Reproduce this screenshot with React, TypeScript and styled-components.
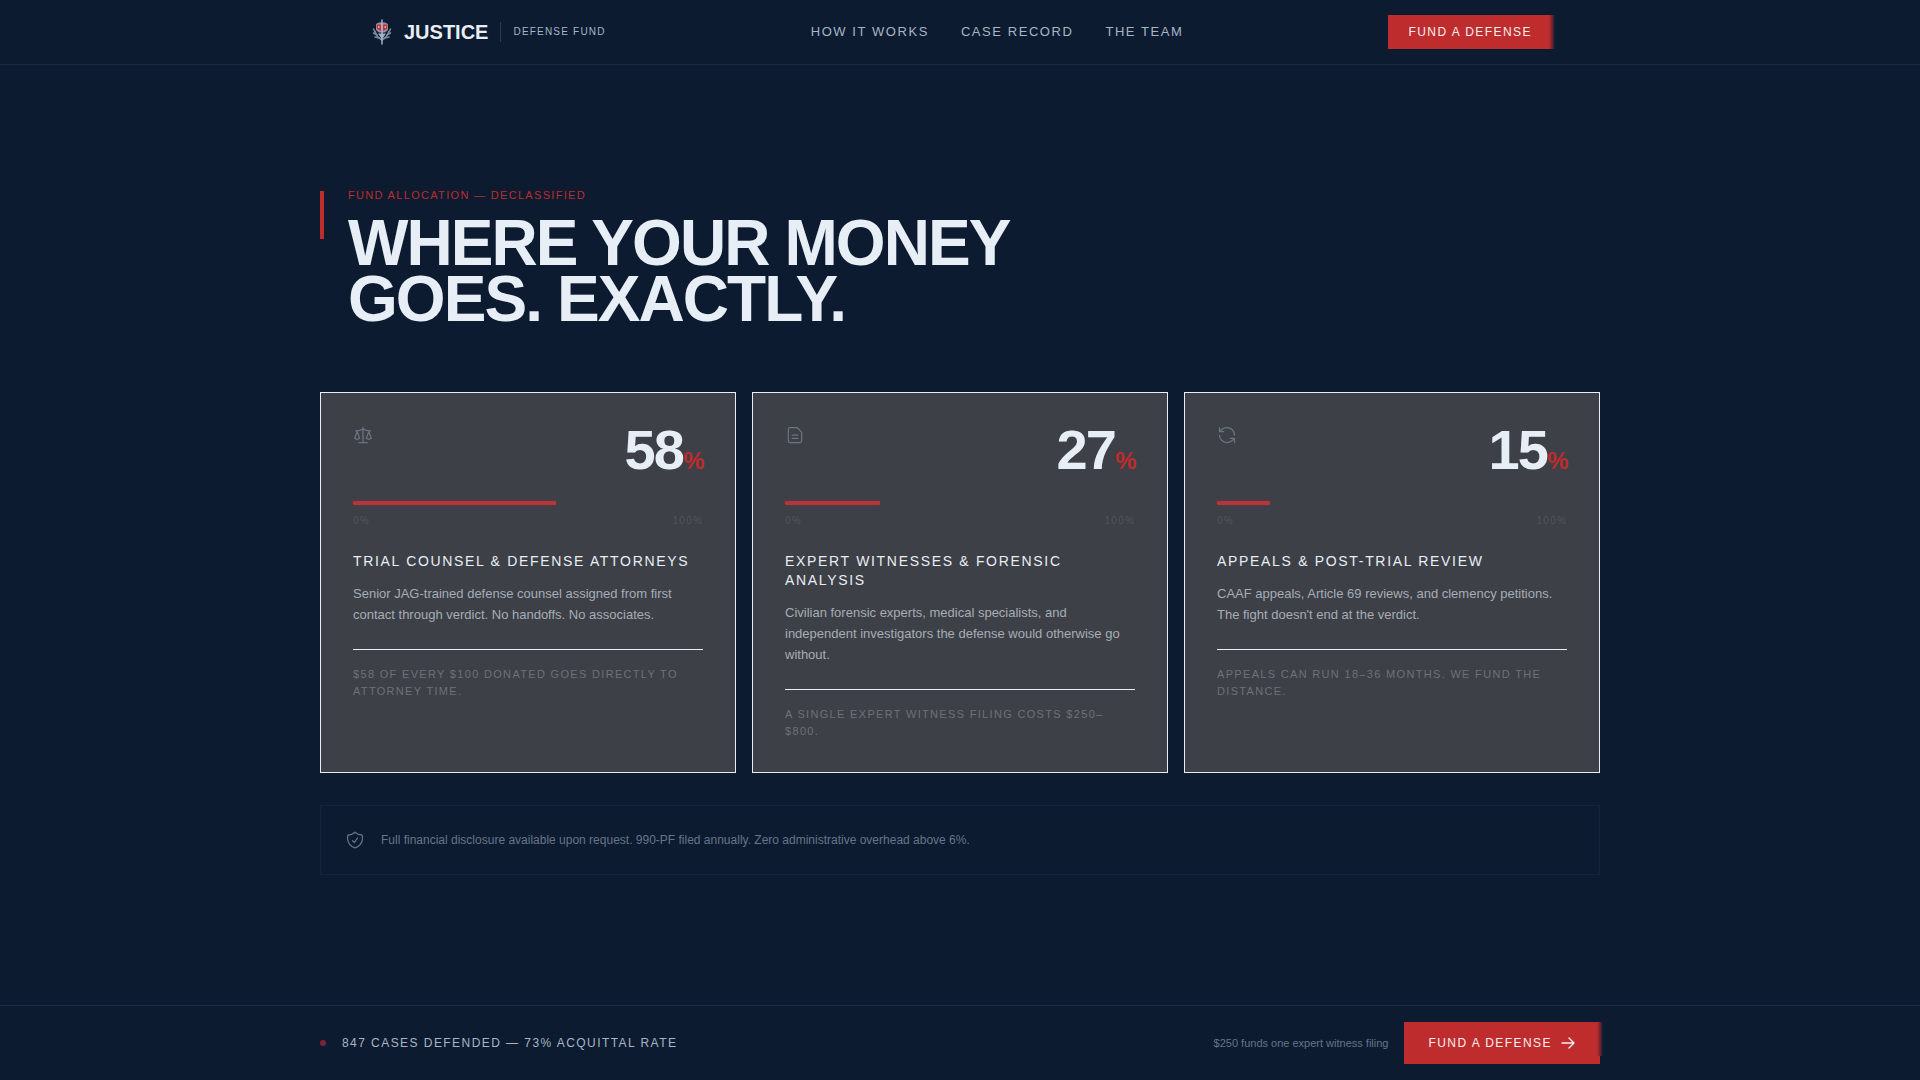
import React from "react";
import styled, { createGlobalStyle } from "styled-components";
import { RefreshCcw, Scale as ScaleIcon } from "lucide-react";
import { HiOutlineArrowRight, HiOutlineShieldCheck } from "react-icons/hi2";

const color = {
  navy: "#0c1b30",
  ice: "#e8eef5",
  red: "#bf2c2d",
  steel: "#a9b5c4",
  slate: "#66758a",
  icon: "#6a7480",
  card: "#3d4046",
  line: "#1b2a40",
};

const tracking = "0.12em";

const GlobalStyle = createGlobalStyle`
  *, *::before, *::after { box-sizing: border-box; }
  body {
    margin: 0;
    background: ${color.navy};
    color: ${color.ice};
    font-family: "Liberation Sans", Arial, sans-serif;
  }
  h1, h2, p { margin: 0; font-weight: 400; }
`;

const Page = styled.div`
  min-height: 100vh;
  display: flex;
  flex-direction: column;
`;

const TopBar = styled.header`
  border-bottom: 1px solid ${color.line};
`;

const TopBarInner = styled.div`
  max-width: 1280px;
  margin: 0 auto;
  padding: 15px 48px;
  display: flex;
  align-items: center;
  justify-content: space-between;
`;

const Brand = styled.a`
  display: flex;
  align-items: center;
  color: inherit;
  text-decoration: none;
`;

const BrandName = styled.span`
  margin-left: 8px;
  font-size: 20px;
  line-height: 24px;
  font-weight: 700;
`;

const BrandSub = styled.span`
  margin-left: 12px;
  padding-left: 12px;
  border-left: 1px solid #2a394e;
  font-size: 10px;
  line-height: 20px;
  letter-spacing: ${tracking};
  color: ${color.steel};
`;

const Nav = styled.nav`
  display: flex;
  gap: 32px;
`;

const NavLink = styled.a`
  font-size: 13px;
  line-height: 20px;
  letter-spacing: ${tracking};
  color: ${color.steel};
  text-decoration: none;
`;

const FundButton = styled.button<{ $large?: boolean }>`
  position: relative;
  display: flex;
  align-items: center;
  gap: 8px;
  height: ${(p) => (p.$large ? 42 : 34)}px;
  padding: 0 ${(p) => (p.$large ? 24 : 20)}px;
  border: 0;
  background: ${color.red};
  color: #fbeff0;
  font-family: inherit;
  font-size: 12px;
  line-height: 16px;
  letter-spacing: ${tracking};
  cursor: pointer;

  &::after {
    content: "";
    position: absolute;
    top: 0;
    right: -3px;
    width: 6px;
    height: 34px;
    background: linear-gradient(90deg, ${color.red}, #6a2230 55%, ${color.navy});
  }
`;

const Main = styled.main`
  flex: 1;
  width: 100%;
  max-width: 1280px;
  margin: 0 auto;
  padding: 122px 0 96px;
`;

const Intro = styled.section`
  display: flex;
  align-items: flex-start;
  gap: 24px;
`;

const Accent = styled.span`
  width: 4px;
  height: 48px;
  margin-top: 4px;
  background: ${color.red};
`;

const Eyebrow = styled.p`
  font-size: 11px;
  line-height: 16px;
  letter-spacing: ${tracking};
  color: ${color.red};
`;

const Headline = styled.h1`
  margin-top: 12px;
  font-size: 64px;
  line-height: 0.88;
  font-weight: 700;
  letter-spacing: -0.03em;
`;

const Cards = styled.section`
  display: grid;
  grid-template-columns: repeat(3, 1fr);
  gap: 16px;
  margin-top: 64px;
`;

const Card = styled.article`
  padding: 32px;
  border: 1px solid ${color.ice};
  background: ${color.card};
`;

const CardTop = styled.div`
  display: flex;
  align-items: flex-start;
  justify-content: space-between;
  color: ${color.icon};
`;

const Share = styled.div`
  font-size: 56px;
  line-height: 50px;
  font-weight: 700;
  letter-spacing: -0.03em;
  color: ${color.ice};
`;

const Percent = styled.span`
  font-size: 24px;
  line-height: 24px;
  color: ${color.red};
`;

const Track = styled.div`
  margin-top: 26px;
  height: 4px;
`;

const Fill = styled.div`
  height: 100%;
  border-radius: 1px;
  background: #b6343a;
  box-shadow: 0 0 2px rgba(191, 44, 45, 0.5);
`;

const Ends = styled.div`
  display: flex;
  justify-content: space-between;
  margin-top: 8px;
  font-size: 10px;
  line-height: 15px;
  letter-spacing: ${tracking};
  color: #51555c;
`;

const CardTitle = styled.h2`
  margin-top: 24px;
  font-size: 14px;
  line-height: 19px;
  letter-spacing: ${tracking};
`;

const CardText = styled.p`
  margin-top: 12px;
  font-size: 13px;
  line-height: 21px;
  color: #a6adb6;
`;

const CardNote = styled.p`
  margin-top: 24px;
  padding-top: 16px;
  border-top: 1px solid ${color.ice};
  font-size: 11px;
  line-height: 17px;
  letter-spacing: ${tracking};
  color: #6c727b;
`;

const Disclosure = styled.section`
  display: flex;
  align-items: center;
  gap: 16px;
  margin-top: 32px;
  padding: 24px;
  border: 1px solid #14243b;
  color: ${color.slate};
  font-size: 12px;
  line-height: 20px;
`;

const BottomBar = styled.footer`
  border-top: 1px solid #213046;
`;

const BottomInner = styled.div`
  max-width: 1280px;
  margin: 0 auto;
  padding: 16px 0;
  display: flex;
  align-items: center;
  justify-content: space-between;
`;

const Group = styled.div`
  display: flex;
  align-items: center;
  gap: 16px;
`;

const Dot = styled.span`
  width: 6px;
  height: 6px;
  border-radius: 50%;
  background: #7c2433;
`;

const Record = styled.span`
  font-size: 12px;
  line-height: 16px;
  letter-spacing: ${tracking};
  color: ${color.steel};
`;

const Hint = styled.span`
  font-size: 11px;
  line-height: 16px;
  color: ${color.slate};
`;

const Emblem = () => (
  <svg width="28" height="28" viewBox="0 0 28 28" fill="none" aria-hidden="true">
    <path d="M8 6l3-1.500h6L20 6v6l-3 2.500h-6L8 12z" fill="#8d97a6" />
    <path d="M8.500 6.500h4.500v6.500l-4-2zM19.500 6.500H15v6.500l4-2z" fill="#c5303a" />
    <path d="M10 8h1.500v2H10zM16.500 8H18v2h-1.500z" fill="#e0a0a6" />
    <path
      d="M5.500 11l1.500 3M22.500 11 21 14M5.500 15l3.500 2M22.500 15 19 17M7 19l4 1M21 19l-4 1"
      stroke="#7d8a9c"
      strokeWidth="1.500"
      strokeLinecap="round"
    />
    <path d="M7 13c1 4.500 3.500 7 7 9 3.500-2 6-4.500 7-9" stroke="#7d8a9c" strokeWidth="1.500" />
    <path d="M10 15.500h8l-4 6z" fill="#a2adbc" />
    <path d="M14 2v24" stroke="#a9b5c4" strokeWidth="1.500" strokeLinecap="round" />
  </svg>
);

const FileIcon = () => (
  <svg
    width="20"
    height="20"
    viewBox="0 0 24 24"
    fill="none"
    stroke="currentColor"
    strokeWidth="1.500"
    strokeLinecap="round"
    strokeLinejoin="round"
    aria-hidden="true"
  >
    <path d="M6 3h8.500L20 8.500V19a2 2 0 0 1-2 2H6a2 2 0 0 1-2-2V5a2 2 0 0 1 2-2z" />
    <path d="M8.500 12h7M8.500 16h7" />
  </svg>
);

const allocations = [
  {
    icon: <ScaleIcon size={20} strokeWidth={1.5} />,
    share: 58,
    title: "TRIAL COUNSEL & DEFENSE ATTORNEYS",
    text: "Senior JAG-trained defense counsel assigned from first contact through verdict. No handoffs. No associates.",
    note: "$58 OF EVERY $100 DONATED GOES DIRECTLY TO ATTORNEY TIME.",
  },
  {
    icon: <FileIcon />,
    share: 27,
    title: "EXPERT WITNESSES & FORENSIC ANALYSIS",
    text: "Civilian forensic experts, medical specialists, and independent investigators the defense would otherwise go without.",
    note: "A SINGLE EXPERT WITNESS FILING COSTS $250–$800.",
  },
  {
    icon: <RefreshCcw size={20} strokeWidth={1.5} />,
    share: 15,
    title: "APPEALS & POST-TRIAL REVIEW",
    text: "CAAF appeals, Article 69 reviews, and clemency petitions. The fight doesn't end at the verdict.",
    note: "APPEALS CAN RUN 18–36 MONTHS. WE FUND THE DISTANCE.",
  },
];

export default function App() {
  return (
    <Page>
      <GlobalStyle />
      <TopBar>
        <TopBarInner>
          <Brand href="#">
            <Emblem />
            <BrandName>JUSTICE</BrandName>
            <BrandSub>DEFENSE FUND</BrandSub>
          </Brand>
          <Nav>
            <NavLink href="#how">HOW IT WORKS</NavLink>
            <NavLink href="#record">CASE RECORD</NavLink>
            <NavLink href="#team">THE TEAM</NavLink>
          </Nav>
          <FundButton>FUND A DEFENSE</FundButton>
        </TopBarInner>
      </TopBar>
      <Main>
        <Intro>
          <Accent />
          <div>
            <Eyebrow>FUND ALLOCATION — DECLASSIFIED</Eyebrow>
            <Headline>
              WHERE YOUR MONEY
              <br />
              GOES. EXACTLY.
            </Headline>
          </div>
        </Intro>
        <Cards>
          {allocations.map(({ icon, share, title, text, note }) => (
            <Card key={title}>
              <CardTop>
                {icon}
                <Share>
                  {share}
                  <Percent>%</Percent>
                </Share>
              </CardTop>
              <Track>
                <Fill style={{ width: `${share}%` }} />
              </Track>
              <Ends>
                <span>0%</span>
                <span>100%</span>
              </Ends>
              <CardTitle>{title}</CardTitle>
              <CardText>{text}</CardText>
              <CardNote>{note}</CardNote>
            </Card>
          ))}
        </Cards>
        <Disclosure>
          <HiOutlineShieldCheck size={20} />
          <p>
            Full financial disclosure available upon request. 990-PF filed annually. Zero
            administrative overhead above 6%.
          </p>
        </Disclosure>
      </Main>
      <BottomBar>
        <BottomInner>
          <Group>
            <Dot />
            <Record>847 CASES DEFENDED — 73% ACQUITTAL RATE</Record>
          </Group>
          <Group>
            <Hint>$250 funds one expert witness filing</Hint>
            <FundButton $large>
              FUND A DEFENSE
              <HiOutlineArrowRight size={16} strokeWidth={2} />
            </FundButton>
          </Group>
        </BottomInner>
      </BottomBar>
    </Page>
  );
}
